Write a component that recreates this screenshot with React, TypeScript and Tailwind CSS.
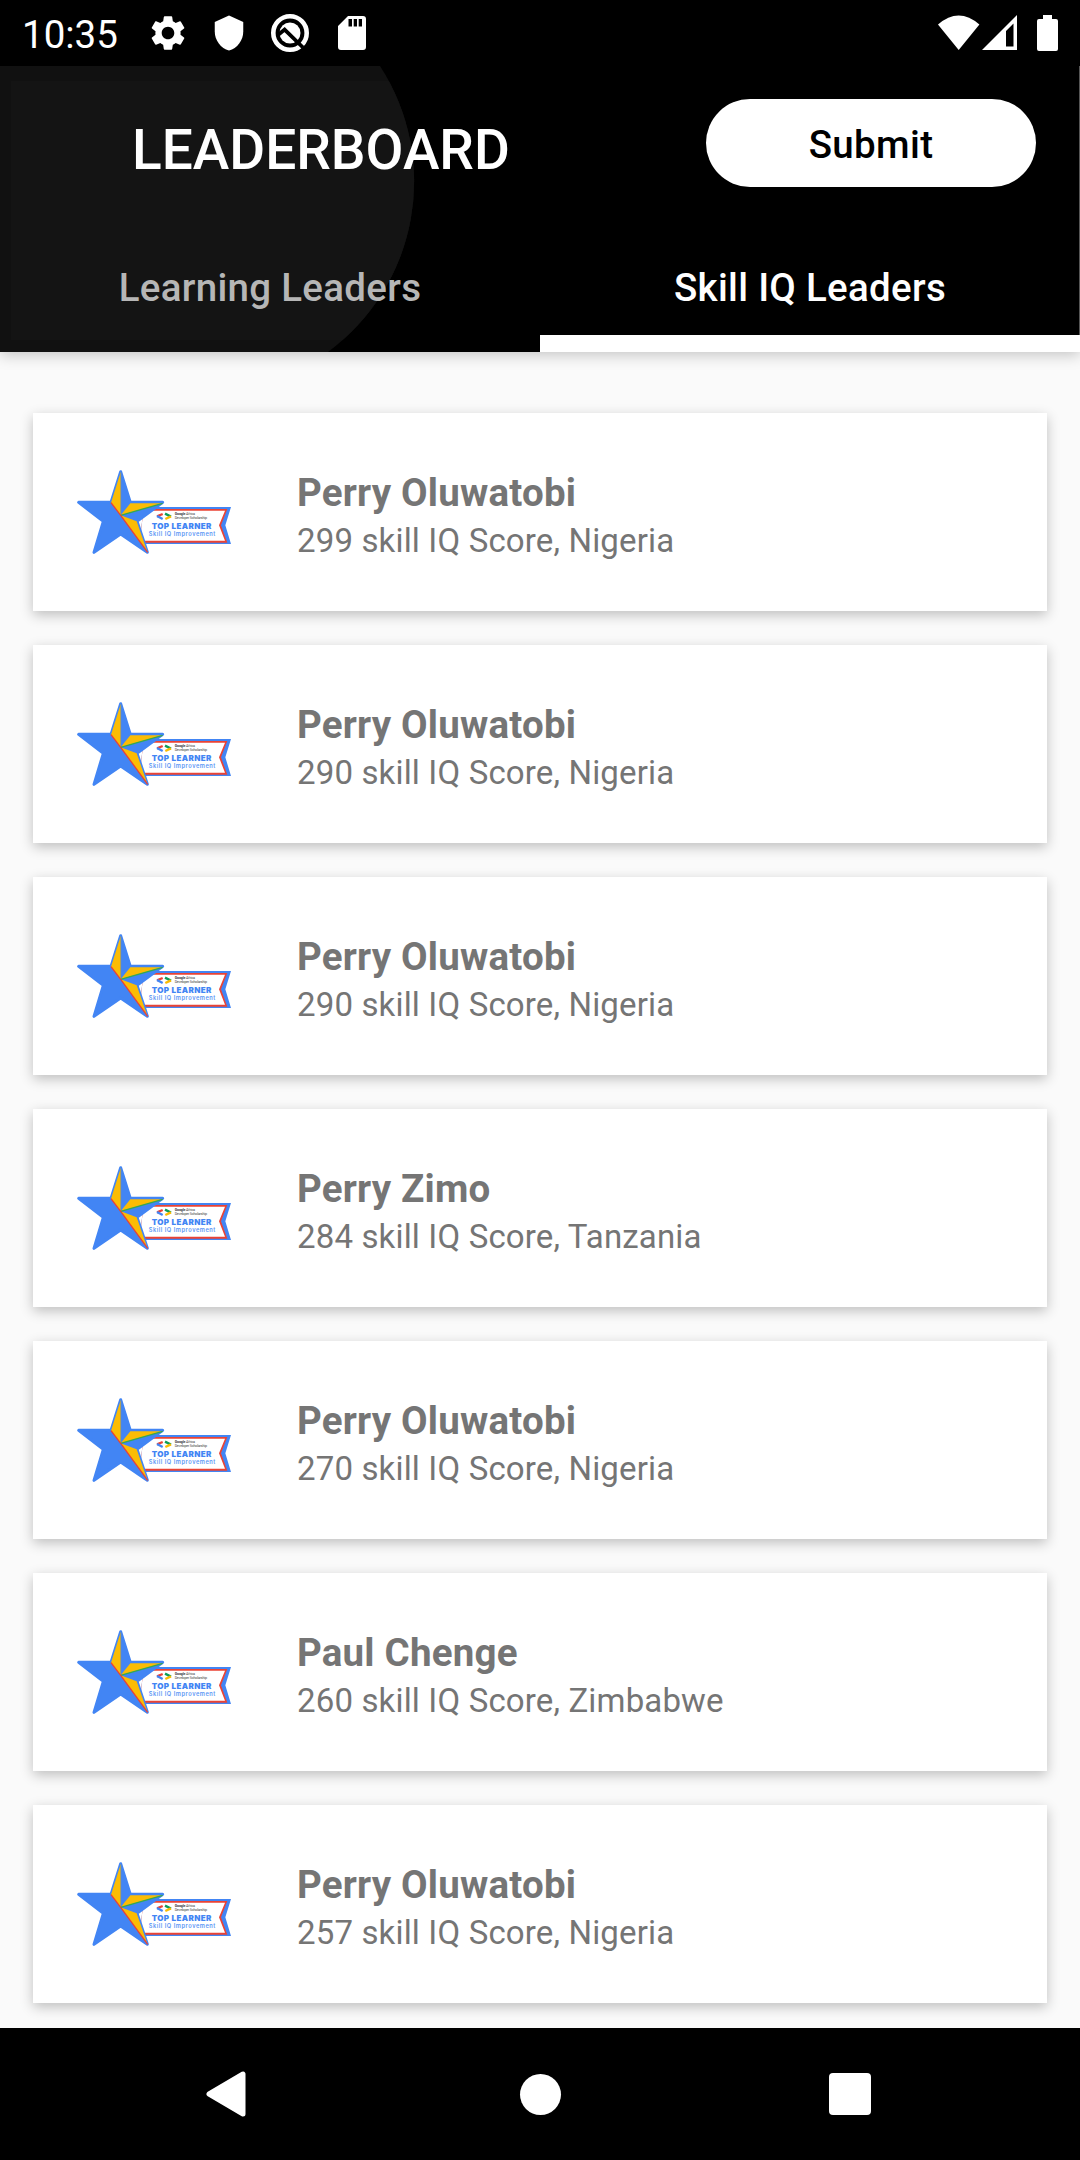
import React from "react";
import { MdSettings, MdShield } from "react-icons/md";

type Leader = { name: string; score: number; country: string };

const leaders: Leader[] = [
  { name: "Perry Oluwatobi", score: 299, country: "Nigeria" },
  { name: "Perry Oluwatobi", score: 290, country: "Nigeria" },
  { name: "Perry Oluwatobi", score: 290, country: "Nigeria" },
  { name: "Perry Zimo", score: 284, country: "Tanzania" },
  { name: "Perry Oluwatobi", score: 270, country: "Nigeria" },
  { name: "Paul Chenge", score: 260, country: "Zimbabwe" },
  { name: "Perry Oluwatobi", score: 257, country: "Nigeria" },
];

function StatusBar() {
  return (
    <div className="flex h-[66px] shrink-0 items-center justify-between bg-black pl-[22px] pr-[22px] text-white">
      <div className="flex items-center">
        <span className="w-[125px] pt-[3px] text-[38.5px] leading-[45px]">10:35</span>
        <MdSettings className="size-[42px]" />
        <MdShield className="ml-[21px] size-[38px]" />
        <svg className="ml-[22px] h-[40px] w-[40px]" viewBox="0 0 40 40" fill="none">
          <circle cx="20" cy="20" r="16.7" stroke="white" strokeWidth="4.6" />
          <circle cx="20" cy="20" r="10.5" fill="white" />
          <path d="M8.3 21.8L14.6 16.6L33 34.5" stroke="black" strokeWidth="3.8" />
        </svg>
        <svg className="ml-[28px] h-[36px] w-[28px]" viewBox="0 0 28 36">
          <path
            fill="white"
            fillRule="evenodd"
            d="M10 1H25Q28 1 28 4V32Q28 35 25 35H3Q0 35 0 32V11ZM10.5 4V11.5H14V4ZM15.7 4V11.5H19V4ZM20.7 4V11.5H24V4Z"
          />
        </svg>
      </div>
      <div className="flex items-center">
        <svg className="h-[36px] w-[42px]" viewBox="0 0 42 36">
          <path fill="white" d="M0 9.5Q20.7 -8.5 41.4 9.5L20.7 35Z" />
        </svg>
        <svg className="ml-[2px] h-[36px] w-[35px]" viewBox="0 0 35 36">
          <path fill="white" fillRule="evenodd" d="M35 0V35H0ZM31.5 8.5L24 16V31.5H31.5Z" />
        </svg>
        <svg className="ml-[20px] h-[36px] w-[21px]" viewBox="0 0 21 36">
          <path fill="white" d="M6 0H15V4H19Q21 4 21 6V34Q21 36 19 36H2Q0 36 0 34V6Q0 4 2 4H6Z" />
        </svg>
      </div>
    </div>
  );
}

function Header() {
  return (
    <header className="relative z-10 flex h-[286px] shrink-0 flex-col bg-black shadow-[0_3px_14px_rgba(0,0,0,0.22)]">
      <svg className="absolute inset-0 h-full w-full" viewBox="0 0 1080 286">
        <defs>
          <clipPath id="bubble">
            <path d="M0 0H380A212 212 0 0 1 328 286H0Z" />
          </clipPath>
        </defs>
        <g clipPath="url(#bubble)">
          <rect width="430" height="286" fill="#111111" />
          <rect x="11" y="15" width="430" height="259" fill="#141414" />
        </g>
        <rect x="1079" width="1" height="269" fill="#555555" />
      </svg>
      <div className="relative flex items-start justify-between pl-[132px] pr-[44px] pt-[33px]">
        <h1 className="pt-[19px] text-[55px] font-medium leading-[64px] text-white">LEADERBOARD</h1>
        <button className="h-[88px] w-[330px] rounded-full bg-white pt-[3px] text-[38.5px] font-medium leading-[45px] tracking-[0.35px] text-black">
          Submit
        </button>
      </div>
      <nav className="relative mt-auto grid h-[132px] grid-cols-2 text-[38.5px] font-medium leading-[45px] tracking-[0.3px]">
        <button className="flex justify-center pt-[45px] text-[#b6b6b6]">Learning Leaders</button>
        <button className="flex justify-center border-b-[17px] border-white pt-[45px] text-white">
          Skill IQ Leaders
        </button>
      </nav>
    </header>
  );
}

function SkillBadge() {
  return (
    <svg className="mt-[6px] h-[120px] w-[190px] shrink-0" viewBox="0 0 570 360">
      <path d="M250 156H513L496 211L513 267H240Z" fill="#4285f4" />
      <path d="M250 162H502L483 211L502 263H240Z" fill="#ea4335" />
      <path d="M250 167H495L477 211L495 257H240Z" fill="#ffffff" />
      <path
        d="M182 50L211 142H308L231 199L262 292L182 237L102 292L130 199L56 142H153Z"
        fill="#4285f4"
        stroke="#4285f4"
        strokeWidth="9"
        strokeLinejoin="round"
      />
      <path d="M182 52V181L153 143Z" fill="#fbbc04" />
      <path d="M182 181L211 145H308Z" fill="#fbbc04" />
      <path d="M182 181L230 199L262 290Z" fill="#fbbc04" />
      <path d="M182 52V181" stroke="#9a9a70" strokeWidth="2" />
      <path d="M182 181L308 145" stroke="#34a853" strokeWidth="4" />
      <path d="M153 143L182 181L263 292" stroke="#ea4335" strokeWidth="4" fill="none" />
      <g fill="none" strokeWidth="7">
        <path d="M308 177L291 184" stroke="#ea4335" />
        <path d="M291 183L308 192" stroke="#4285f4" />
        <path d="M315 176L333 185" stroke="#0f9d58" />
        <path d="M333 184L316 192" stroke="#fbbc04" />
      </g>
      <g fontFamily="Roboto, sans-serif">
        <text x="344" y="180" fontSize="11" fill="#444444" textLength="61">
          <tspan fontWeight="700">Google</tspan> Africa
        </text>
        <text x="344" y="192" fontSize="11" fill="#444444" textLength="97">
          Developer Scholarship
        </text>
        <text x="275" y="223" fontSize="24" fontWeight="900" fill="#4285f4" textLength="179" fontFamily="Inter, sans-serif">
          TOP LEARNER
        </text>
        <text x="266" y="243" fontSize="17" fontWeight="600" fill="#5b96f5" textLength="200" fontFamily="Inter, sans-serif">
          Skill IQ Improvement
        </text>
      </g>
    </svg>
  );
}

function LeaderCard({ leader }: { leader: Leader }) {
  return (
    <li className="flex h-[198px] shrink-0 items-center bg-white pl-[27px] text-[#757575] shadow-[0_4px_12px_rgba(0,0,0,0.24)]">
      <SkillBadge />
      <div className="ml-[47px] pt-[9px]">
        <p className="text-[38.5px] font-bold leading-[46px] tracking-[0.2px]">{leader.name}</p>
        <p className="mt-[3px] text-[33px] leading-[44px] tracking-[0.15px]">
          {leader.score} skill IQ Score, {leader.country}
        </p>
      </div>
    </li>
  );
}

function NavigationBar() {
  return (
    <div className="relative z-10 grid h-[132px] shrink-0 grid-cols-[206px_40px_1fr_42px_209px] items-center bg-black">
      <svg className="col-start-2 h-[46px] w-[40px]" viewBox="0 0 40 46">
        <path
          d="M37 3V43L3 23Z"
          fill="white"
          stroke="white"
          strokeWidth="5"
          strokeLinejoin="round"
        />
      </svg>
      <div className="ml-[274px] h-[41px] w-[41px] rounded-full bg-white" />
      <div className="h-[42px] w-[42px] rounded-[4px] bg-white" />
    </div>
  );
}

export default function App() {
  return (
    <div className="flex h-[2160px] w-[1080px] flex-col overflow-hidden bg-[#fafafa] font-['Roboto',sans-serif]">
      <StatusBar />
      <Header />
      <main className="min-h-0 flex-1 px-[33px] pt-[61px]">
        <ul className="flex flex-col gap-[34px]">
          {leaders.map((leader, i) => (
            <LeaderCard key={i} leader={leader} />
          ))}
        </ul>
      </main>
      <NavigationBar />
    </div>
  );
}
